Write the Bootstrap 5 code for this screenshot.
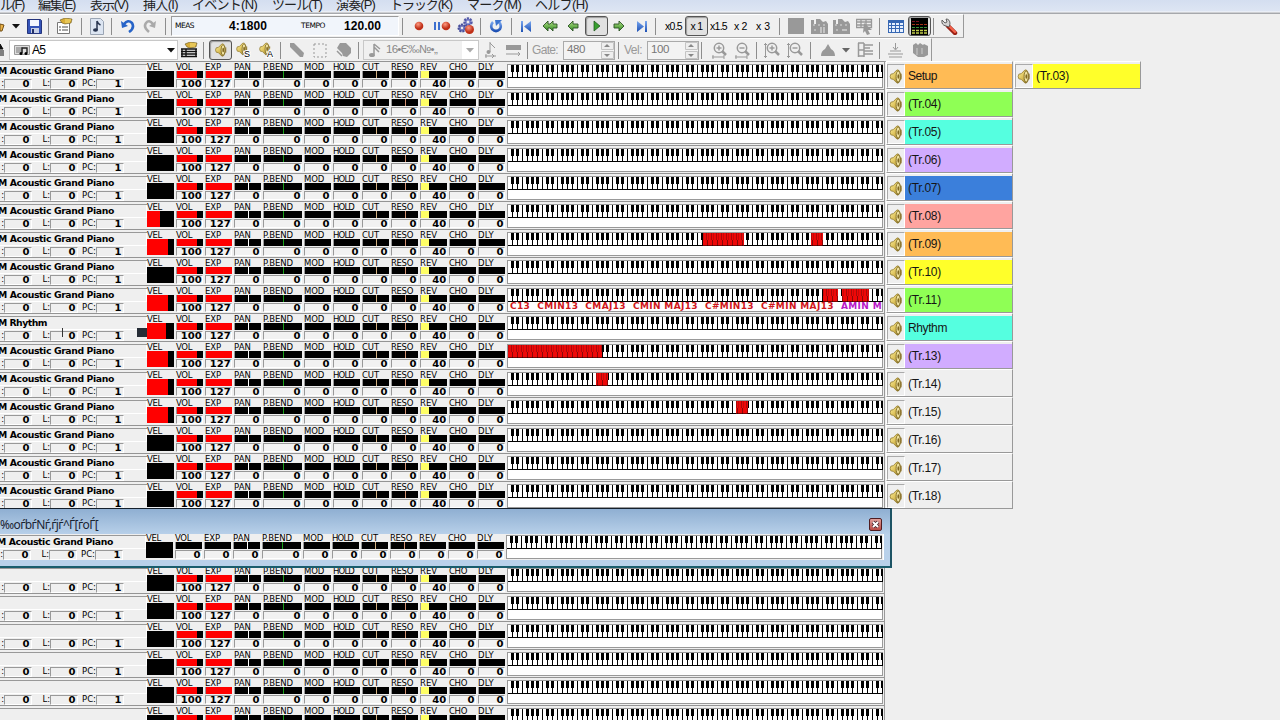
<!DOCTYPE html>
<html lang="ja">
<head>
<meta charset="utf-8">
<title>MIDI Sequencer</title>
<meta name="viewport" content="width=device-width, initial-scale=1">
<link rel="stylesheet" href="https://cdn.jsdelivr.net/npm/bootstrap@5.3.0/dist/css/bootstrap.min.css">
<style>
*{box-sizing:border-box}
body{background:#efefef;width:1280px;height:720px;overflow:hidden;font-family:"Liberation Sans","Noto Sans CJK JP",sans-serif;color:#000;line-height:1}
svg{display:block;flex:none}
.fit{display:inline-block;white-space:nowrap;flex:none}
.menustrip{height:14px;background:linear-gradient(#d4def0,#dde5f3 11px,#f6f7fa 12px,#a6a8ac 13px);font-size:13px;color:#222}
.menustrip .fit{line-height:16px;margin-top:-6px;position:relative;top:-2px}
.bar{border-bottom:1px solid #aaa;border-top:1px solid #fff;background:#f0f0f0;flex:none}
.bar1{width:964px;height:24px;border-right:1px solid #999}
.bar2{width:932px;height:24px;border-right:1px solid #999}
.cell{height:22px;flex:none;white-space:nowrap}
.vsep{width:1px;height:17px;background:#8d8d8d}
.panel{background:#f1f5fb;border:1px solid #9a9a9a;border-right-color:#fff;border-bottom-color:#fff;height:20px;font-family:"DejaVu Sans",sans-serif}
.pressed{background:#e1e1e1;border:1px solid #555;border-radius:3px;box-shadow:inset 1px 1px 1px #999;height:20px;width:100%}
.combo{border:1px solid #c8c8c8;height:20px;width:100%}
.spin{border:1px solid #aaa;height:19px;width:100%;color:#777;background:#f3f3f3}
.gothic{font-family:"Liberation Sans",sans-serif}
.tracks{width:885px;border-right:1px solid #999;flex:none}
.trk{height:28px;border-top:1px solid #949494;flex:none;background:#efefef}
.ident{width:147px;height:25px;margin-top:2px;border-top:1px solid #999;flex:none}
.nm{height:13px;border-right:1px solid #fff;border-bottom:1px solid #fff;font:bold 9.3px/11px "DejaVu Sans",sans-serif;width:147px}
.nums{margin-top:1px;height:10px;font:8.5px/9px "DejaVu Sans",sans-serif}
.lab{text-align:right;flex:none;white-space:nowrap}
.num{border-left:1px solid #999;border-top:1px solid #999;border-right:1px solid #fff;border-bottom:1px solid #fff;width:28px;height:10px;font:bold 9.5px/7px "DejaVu Sans",sans-serif;text-align:right;padding-right:1px;flex:none}
.num b,.val b{display:inline-block;transform:scaleX(1.06);transform-origin:100% 50%}
.mtr{width:27px;margin-right:2px;flex:none;padding-top:2px}
.cap{height:7px;font:8.5px/7px "DejaVu Sans",sans-serif;white-space:nowrap}
.cap .fit{vertical-align:top;line-height:6px}
.gauge{background:#000;height:7px;border-left:1px solid #999;display:flex}
.gauge i{display:block;height:7px;flex:none}
.val{border:1px solid #999;border-right-color:#fff;border-bottom-color:#fff;height:9px;font:bold 9.5px/7px "DejaVu Sans",sans-serif;text-align:right;margin-top:1px;background:#f2f2f2}
.vel{background:#000;height:16px;width:27px}
.keys{width:376px;height:24px;border:1px solid #999;background:#fff;margin-top:2px;flex:none}
.chords{font:bold 9px/9px "DejaVu Sans",sans-serif;color:#d01820;padding-left:2px;white-space:nowrap}
.chords em{font-style:normal;color:#b818c8}
.tcell{width:127px;height:28px;border:1px solid #999;border-left-color:#fff;border-top-color:#fff;flex:none;background:#efefef;padding:2px 0 0 0}
.spk{width:18px;height:24px;border:1px solid #aaa;border-right-color:#fff;border-bottom-color:#fff;flex:none}
.tname{height:24px;width:107px;font-size:12px;padding-left:3px;color:#151515}
.floater{left:-2px;top:508px;width:894px;height:60px;background:linear-gradient(#8fafd2,#b9d1ea 26px,#b9d1ea);border:1px solid #15202c;border-right:2px solid #1c5364;border-bottom:2px solid #1a5d6d}
.ftitle{height:25px;font:12px/31px "Noto Sans","DejaVu Sans",sans-serif;color:#1a2433}
.client{width:885px;height:26px;background:#efefef;border-right:1px solid #fff}
.client .trk{border-top:0;height:26px;background:none}
.client .trk>*{position:relative;top:-1px}
.xbtn{width:13px;height:13px;border:1px solid #501c20;border-radius:2px;background:linear-gradient(#e0a09c,#b94a45);margin-top:9px;margin-right:8px}
.blob{left:137px;top:328px;width:10px;height:9px;background:#252c35}
.hair{left:62px;top:328px;width:1px;height:9px;background:#333}
</style>
</head>
<body>
<svg width="0" height="0" class="position-absolute">
<defs>
<linearGradient id="gold" x1="0" y1="0" x2="1" y2="1"><stop offset="0" stop-color="#fff3a0"/><stop offset=".5" stop-color="#dcc058"/><stop offset="1" stop-color="#77601a"/></linearGradient>
<radialGradient id="redg" cx=".4" cy=".3"><stop offset="0" stop-color="#ff9a80"/><stop offset="1" stop-color="#c03018"/></radialGradient>
<linearGradient id="blu" x1="0" y1="0" x2="0" y2="1"><stop offset="0" stop-color="#7aa8f0"/><stop offset="1" stop-color="#1d50b4"/></linearGradient>
<linearGradient id="grn" x1="0" y1="0" x2="0" y2="1"><stop offset="0" stop-color="#b4e088"/><stop offset="1" stop-color="#2f8a20"/></linearGradient>
<pattern id="oct" width="35" height="13" patternUnits="userSpaceOnUse">
<path fill="#fff" d="M0 0h35v13H0z"/><path fill="#000" d="M4 0h1v12H4zM9 0h1v12H9zM14 0h1v12h-1zM19 0h1v12h-1zM24 0h1v12h-1zM29 0h1v12h-1zM34 0h1v12h-1zM3 0h3v7H3zM8 0h3v7H8zM18 0h3v7h-3zM23 0h3v7h-3zM28 0h3v7h-3zM0 12h35v1H0z"/></pattern>
<pattern id="hot" width="5" height="13" patternUnits="userSpaceOnUse">
<path fill="#ee0808" d="M0 0h5v13H0z"/><path fill="#8a0808" d="M4 7h1v6H4z"/><path fill="#a80a0a" d="M3 0h1v7H3z"/><path fill="#c80808" d="M0 0h1v7H0z"/></pattern>
<symbol id="s-spk" viewBox="0 0 14 16"><path d="M1.500 5.500L4 5l4-4q2-.5 3 2 2.500 5 0 10-1 2.500-3 2l-4-4-2.500-.5q-1.500-2.500 0-5z" fill="url(#gold)" stroke="#8b7326" stroke-width=".8"/><ellipse cx="9.300" cy="8" rx="2.200" ry="6" fill="#f0e2a0" stroke="#6f5b18" stroke-width=".8"/><ellipse cx="9.500" cy="8" rx="1" ry="2.500" fill="#806820"/><path d="M12.500 5v6" stroke="#927830"/></symbol>
<symbol id="s-mag" viewBox="0 0 17 17"><circle cx="8" cy="6" r="4.700" fill="none" stroke="#999" stroke-width="1.500"/><path d="M11 9l4 4" stroke="#999" stroke-width="2.500"/><path d="M5.500 6h5" stroke="#999" stroke-width="1.400"/></symbol>
<symbol id="s-arr" viewBox="0 0 12 12"><path d="M1 6l5-5v3h5v4H6v3z" fill="url(#grn)" stroke="#2b5225" stroke-width=".9"/></symbol>
<symbol id="s-dn" viewBox="0 0 8 5"><path d="M0 0h8L4 4.500z"/></symbol>
</defs></svg>

<div class="d-flex flex-column">
  <nav class="menustrip d-flex" id="menu"></nav>
  <div class="bar bar1 d-flex" id="bar1"></div>
  <div class="bar bar2 d-flex" id="bar2"></div>
</div>
<main class="d-flex align-items-start" style="margin-top:-1px">
  <section class="tracks d-flex flex-column" id="tracks"></section>
  <section class="d-flex flex-column" id="cells"></section>
</main>
<div class="blob position-absolute"></div><div class="hair position-absolute"></div>
<div class="floater position-absolute">
  <div class="ftitle d-flex justify-content-between"><span class="fit" data-w="98" style="margin-left:1px">‰oѓbѓNѓ‚ѓjѓ^Ѓ[ѓoЃ[</span>
  <div class="xbtn"><svg width="11" height="11" viewBox="0 0 11 11"><path d="M3 3l5 5M8 3L3 8" stroke="#402028" stroke-width="3.500"/><path d="M3 3l5 5M8 3L3 8" stroke="#fff" stroke-width="2"/></svg></div></div>
  <div class="client" id="client"></div>
</div>

<script src="https://cdn.jsdelivr.net/npm/bootstrap@5.3.0/dist/js/bootstrap.bundle.min.js"></script>
<script>
const $=id=>document.getElementById(id);
const fit=(t,w,c='',s='')=>`<span class="fit ${c}" data-w="${w}" style="${s}">${t}</span>`;
const svg=(w,h,b)=>`<svg width="${w}" height="${h}" viewBox="0 0 ${w} ${h}">${b}</svg>`;
const use=(id,w,h,f='')=>`<svg width="${w}" height="${h}" ${f}><use href="#${id}" width="${w}" height="${h}"/></svg>`;
// items are [start, width, markup]; the space between neighbours becomes a margin
function strip(items){let at=0;return items.map(([x,w,h])=>{const m=x-at;at=x+w;return `<div class="cell d-flex align-items-center" style="width:${w}px;margin-left:${m}px">${h}</div>`}).join('')}
const sep=x=>[x,1,'<div class="vsep"></div>'];
$('menu').innerHTML=(()=>{let at=0;return [['ル(F)',0,24],['編集(E)',38,37],['表示(V)',90,38],['挿入(I)',143,35],['イベント(N)',192,65],['ツール(T)',272,50],['演奏(P)',336,39],['トラック(K)',390,62],['マーク(M)',467,54],['ヘルプ(H)',535,53]].map(([t,x,w])=>{const m=x-at;at=x+w;return `<div style="width:${w}px;margin-left:${m}px">${fit(t,w)}</div>`}).join('')})();

const G='#999';
const caret=c=>use('s-dn',8,5,`fill="${c}"`);
const ball='<circle cx="6" cy="6" r="4.300" fill="url(#redg)"/>';
const hand='<path d="M4 2l5-2 7 1-1 4-6 1-3-1z" fill="#d9ad35" stroke="#67561c" stroke-width=".6"/><path d="M9 2h6M9 4h5" stroke="#f6e07b"/>';
const film=(x)=>svg(17,17,`<path d="M0 2h3v4h2V1h4l3 3 3-1 2 3v10H0z" fill="${G}"/><path d="M2 7h2M7 7h2M12 7h2M3 12h2" stroke="#ddd"/>${x}`);
$('bar1').innerHTML=strip([
 [0,5,svg(5,14,'<path d="M0 5l4 1-2 6H0z" fill="#eab248" stroke="#735018"/>')],
 [12,8,caret('#111')],
 [27,15,svg(15,15,'<path d="M.5.5h13l1 1v13H.5z" fill="#3554b8" stroke="#24347c"/><path d="M3 1h9v6H3z" fill="#f4f7ff"/><path d="M4 9h8v5H4z" fill="#c6cfe6"/><path d="M5 10h2v4H5z" fill="#223068"/>')],
 sep(48),
 [56,18,svg(18,17,'<path d="M1.500 4.500h12v11h-12z" fill="#fff" stroke="#777"/><path d="M3 9h2M6 9h6M3 12h2M6 12h6" stroke="#888" stroke-width="1.500"/>'+hand)],
 sep(81),
 [90,14,svg(14,17,'<path d="M.5.5h10l3 3v13H.5z" fill="#dce5f2" stroke="#9aa5b4"/><path d="M7 3v9M7 3q1 3 3.500 4" stroke="#27344f" stroke-width="1.500" fill="none"/><ellipse cx="5.500" cy="12" rx="2.500" ry="1.800" fill="#27344f"/>')],
 sep(111),
 [121,14,svg(14,14,'<path d="M3 5q4-5 8-1 3 5-3 9" fill="none" stroke="#2764c8" stroke-width="2.600"/><path d="M0 2l1 7 6-2z" fill="#2764c8"/>')],
 [143,13,svg(13,14,'<path d="M10 5Q6 0 3 4q-3 4 3 9" fill="none" stroke="#aaa" stroke-width="2.600"/><path d="M13 2l-1 7-6-2z" fill="#aaa"/>')],
 sep(165),
 [171,228,`<div class="panel w-100 d-flex align-items-center">${fit('MEAS',19,'','font-size:7.5px;margin-left:3px')}${fit('4:1800',38,'fw-bold gothic','font-size:12px;margin-left:35px')}${fit('TEMPO',24,'','font-size:7.5px;margin-left:34px')}${fit('120.00',37,'fw-bold gothic','font-size:12px;margin-left:19px')}</div>`],
 sep(402),
 [413,12,svg(12,12,ball)],
 [433,18,svg(18,12,'<path d="M1 2h2v8H1zM5 2h2v8H5z" fill="#3d70cf"/><g transform="translate(7 0)">'+ball+'</g>')],
 [457,18,svg(18,18,'<circle cx="11" cy="5" r="3.500" fill="#888fd0" stroke="#5259a8" stroke-width="2.500" stroke-dasharray="2 1"/><circle cx="5" cy="11" r="3.500" fill="#7078bd" stroke="#464d9a" stroke-width="2" stroke-dasharray="2 1"/><circle cx="5" cy="11" r="1.200" fill="#eee"/><circle cx="11" cy="5" r="1.200" fill="#eee"/><circle cx="12.500" cy="12.500" r="4.500" fill="url(#redg)"/>')],
 sep(480),
 [489,14,svg(14,14,'<path d="M4 3Q1 6 3 10q4 4 8 0 2-4-1-7" fill="none" stroke="url(#blu)" stroke-width="2.600"/><path d="M6 1h7L7 7z" fill="#3c74d0"/>')],
 sep(511),
 [520,13,svg(13,13,'<path d="M1 1h2v11H1zM11 1v11L4 6.500z" fill="url(#blu)"/>')],
 [542,16,svg(16,12,'<path d="M1 6l5-5v3h2l3-3v3h4v4h-4v3L8 8H6v3z" fill="url(#grn)" stroke="#2b5225" stroke-width=".9"/>')],
 [567,12,use('s-arr',12,12)],
 [585,23,`<div class="pressed d-flex align-items-center justify-content-center">${svg(8,12,'<path d="M1 1l6 5-6 5z" fill="#39a030" stroke="#145012" stroke-width=".7"/>')}</div>`],
 [613,12,svg(12,12,'<path d="M11 6L6 1v3H1v4h5v3z" fill="url(#grn)" stroke="#2b5225" stroke-width=".9"/>')],
 [636,12,svg(12,13,'<path d="M9 1h2v11H9zM1 1v11l7-5.500z" fill="url(#blu)"/>')],
 sep(655),
 [665,17,fit('x0.5',17,'','font-size:10.5px')],
 [685,23,`<div class="pressed d-flex align-items-center justify-content-center">${fit('x 1',12,'','font-size:10.5px')}</div>`],
 [710,17,fit('x1.5',17,'','font-size:10.5px')],
 [734,13,fit('x 2',13,'','font-size:10.5px')],
 [756,14,fit('x 3',14,'','font-size:10.5px')],
 sep(779),
 [788,16,svg(16,16,`<path d="M0 0h16v16H0z" fill="${G}"/>`)],
 [811,17,film('<path d="M10 9v6M13 9v6" stroke="#eee"/>')],
 [833,17,film('<path d="M9 12h5" stroke="#eee"/>')],
 [856,18,svg(18,17,`<path d="M.5 1.500h15v8H.5zM.5 4h15M.5 7h15M5 1v8M10 1v8" fill="none" stroke="${G}" stroke-width="1.300"/><path d="M8 5l8 7-4 0 2 4-3 1-2-4-2 2z" fill="${G}"/>`)],
 sep(879),
 [888,16,svg(16,13,'<path d="M0 0h16v13H0z" fill="#3768b4"/><path d="M1 3h2v2H1zM4 3h3v2H4zM8 3h3v2H8zM12 3h3v2h-3zM1 6h2v2H1zM4 6h3v2H4zM8 6h3v2H8zM12 6h3v2h-3zM1 9h2v3H1zM4 9h3v3H4zM8 9h3v3H8zM12 9h3v3h-3z" fill="#e8f1ff"/>')],
 [908,23,`<div class="pressed d-flex align-items-center justify-content-center">${svg(17,17,'<path d="M0 0h17v17H0z"/><g stroke-dasharray="3 1"><path d="M1 3.500h3M5 3.500h3" stroke="#712"/><path d="M1 6.500h15" stroke="#a33018"/><path d="M1 9.500h15" stroke="#369038"/><path d="M1 12.500h15M1 15h15" stroke="#c4cf4c" stroke-width="1.500"/></g>')}</div>`],
 sep(933),
 [941,17,svg(17,17,'<path d="M7 8l7 7" stroke="#9a2015" stroke-width="4.500" stroke-linecap="round"/><path d="M8 8l6 6" stroke="#f3624a" stroke-width="2.300" stroke-linecap="round"/><path d="M1 2q-1 5 4 6l3 1 1-3Q9 1 5 1l1 3-2 1z" fill="#d4d4d4" stroke="#555" stroke-width=".9"/>')]
]);
const mag=(plus,v)=>svg(17,17,`<use href="#s-mag" width="17" height="17"/>${plus?`<path d="M8 3.500v5" stroke="${G}" stroke-width="1.400"/>`:''}${v?`<path d="M1.500 1v15M0 2.500h3M0 14.500h3" stroke="${G}"/>`:`<path d="M1 15h12M2 13v4M13 13v4" stroke="${G}"/>`}`);
const spin=v=>`<div class="spin d-flex align-items-center">${fit(v,18,'','font-size:11.500px;margin-left:3px')}<div class="ms-auto d-flex flex-column" style="gap:1px">${['M3 5l3-3 3 3z','M3 3l3 3 3-3z'].map(d=>svg(13,8,`<path d="M.5.5h12v7H.5z" fill="#eee" stroke="#c4c4c4"/><path d="${d}" fill="#888"/>`)).join('')}</div></div>`;
$('bar2').innerHTML=strip([
 [0,4,svg(4,12,'<path d="M0 0l3 5H0zM0 7h4M0 9h4M0 11h4" stroke="#111" fill="#111"/>')],
 [9,169,`<div class="combo bg-white d-flex align-items-center ps-1">${svg(16,11,'<path d="M.5.500h15v9H.5z" fill="#ddd" stroke="#999"/><path d="M2 3h7M2 5h7M2 7h7" stroke="#777"/><path d="M8 8V3h5v5" fill="none" stroke="#222" stroke-width="1.400"/><circle cx="7" cy="8.500" r="1.500"/><circle cx="12" cy="8.500" r="1.500"/>')}${fit('A5',13,'','font-size:12px;margin-left:2px')}<span class="ms-auto" style="margin-right:2px">${caret('#111')}</span></div>`],
 [181,17,svg(17,16,hand+'<path d="M1 7h15v8H1z" fill="#fff"/><path d="M0 7h16M0 9.500h16M0 12h16M0 14.500h16M1 7v8M5 7v8M15 7v8" stroke="#111" stroke-width="1.400"/>')],
 sep(203),
 [209,23,`<div class="pressed d-flex align-items-center justify-content-center">${use('s-spk',14,14)}</div>`],
 [236,15,svg(15,16,'<use href="#s-spk" width="12" height="14"/><text x="8" y="15" font-size="9" stroke="#fff" stroke-width="2" paint-order="stroke">S</text>')],
 [259,15,svg(15,16,'<use href="#s-spk" width="12" height="14"/><text x="8" y="15" font-size="9" stroke="#fff" stroke-width="2" paint-order="stroke">A</text>')],
 sep(280),
 [289,16,svg(16,16,`<path d="M1 1l4 0 10 10-1 4-3 0L1 5z" fill="${G}"/>`)],
 [313,14,svg(14,15,`<path d="M1 1h12v13H1z" fill="none" stroke="${G}" stroke-dasharray="2 2"/>`)],
 [336,16,svg(16,16,`<path d="M4 1l6 0 5 5 0 5-4 4-4-1-1-3-5-5z" fill="${G}"/><path d="M1 9l5 5" stroke="${G}" stroke-width="1.500"/>`)],
 sep(358),
 [363,116,`<div class="combo d-flex align-items-center ps-1">${svg(13,15,`<path d="M6 1v10M6 1l6 5M6 4l5 5" stroke="${G}" stroke-width="1.500"/><ellipse cx="4" cy="12" rx="3" ry="2" fill="${G}"/>`)}${fit('16•Є‰№•„',51,'','font-size:11.5px;color:#888;margin-left:5px')}<span class="ms-auto bg-white h-100 d-flex align-items-center px-1">${caret('#aaa')}</span></div>`],
 [484,13,svg(13,17,`<path d="M6 0v10M6 1l5 5M1 14h11M2 12v4M10 14l-2-2M10 14l-2 2" stroke="${G}"/><circle cx="4.500" cy="10" r="2" fill="${G}"/>`)],
 [505,17,svg(17,12,`<path d="M1 1h15v5H1z" fill="${G}"/><path d="M1 10h14M13 8l2 2-2 2" fill="none" stroke="${G}"/>`)],
 sep(527),
 [532,27,fit('Gate:',26,'','font-size:12px;color:#999')],
 [563,52,spin('480')],
 sep(618),
 [624,20,fit('Vel:',18,'','font-size:12px;color:#999')],
 [647,52,spin('100')],
 sep(701),
 [711,17,mag(1,0)],[734,17,mag(0,0)],sep(756),[764,17,mag(1,1)],[787,17,mag(0,1)],sep(810),
 [820,16,svg(16,14,`<path d="M1 13q0-5 4-7l3-5 3 5q4 2 4 7z" fill="${G}"/>`)],
 [842,8,caret('#666')],
 [857,17,svg(17,16,`<path d="M1 1h6M1 8h6M1 14h6M1.500 1v14M7 3h9M7 6h6M7 9h9M7 12h9M7 1v14" stroke="${G}" stroke-width="1.500"/>`)],
 sep(879),
 [888,15,svg(15,16,`<path d="M7.500 1v6M5 5l2.500 3L10 5M2 9h11M0 12h15M1 15h13" stroke="${G}" fill="none"/>`)],
 [912,16,svg(16,16,`<path d="M1 3l3-2 2 2 2-2 3 2 1-1 4 2v9l-4 2H6l-5-4z" fill="${G}"/><path d="M5 6v7M10 6v6" stroke="#ccc"/>`)]
]);

// 128 keys = 75 white keys of 5px; hot spans are in px from the lowest key
const keys=(hot,ch)=>`<div class="keys">${svg(375,13,'<path d="M0 0h375v13H0z" fill="url(#oct)"/>'+(hot||[]).map(([a,b])=>`<path d="M${a} 0h${b-a}v12.500H${a}z" fill="url(#hot)"/>`).join(''))}${ch?`<div class="chords">${ch}</div>`:''}</div>`;
const bit=(m,w,c)=>`<i style="margin-left:${m}px;width:${w}px;background:${c}"></i>`;
function row(o){
 const z=o.zero, cols=[['VOL',z?0:100,z?'':bit(0,20,'#f00'),16],['EXP',z?0:127,z?'':bit(0,26,'#f00'),16],['PAN',0,bit(13,1,'#fff'),17],['P.BEND',0,bit(19,1,'#18a018'),30],['MOD',0,'',20],['HOLD',0,'',21],['CUT',0,bit(13,1,'#d2b080'),17],['RESO',0,bit(13,1,'#d29070'),22],['REV',z?0:40,z?'':bit(0,8,'#ff6'),17],['CHO',0,'',18],['DLY',0,'',16]];
 return `<div class="trk d-flex"><div class="ident"><div class="nm">${o.name?fit(o.name,o.name.length>10?116:49,'','margin-left:-2px'):''}</div>
 <div class="nums d-flex"><span class="lab" style="width:4px">:</span><span class="num"><b>0</b></span><span class="lab" style="width:18px">L:</span><span class="num"><b>0</b></span><span class="lab" style="width:18px">${fit('PC:',14)}</span><span class="num"><b>1</b></span></div></div>
 <div class="mtr"><div class="cap">${fit('VEL',15)}</div><div class="vel">${o.vel?`<div class="h-100" style="width:${o.vel}px;background:#f00"></div>`:''}</div></div>
 ${cols.map(([n,v,g,w])=>`<div class="mtr"${n=='P.BEND'?' style="width:39px"':''}><div class="cap">${fit(n,w)}</div><div class="gauge">${g}</div><div class="val"><b>${v}</b></div></div>`).join('')}
 ${keys(o.hot,o.ch)}</div>`}
const P='M Acoustic Grand Piano';
const live={5:{vel:13},6:{vel:21,hot:[[195,236],[303,315]]},8:{vel:21,hot:[[315,330],[334,361]],ch:fit('C13&nbsp; CMIN13&nbsp; CMAJ13&nbsp; CMIN MAJ13&nbsp; C#MIN13&nbsp; C#MIN MAJ13&nbsp; <em>AMIN M</em>',372)},9:{vel:19},10:{vel:21,hot:[[0,94]]},11:{vel:21,hot:[[88,100]]},12:{vel:21,hot:[[228,240]]}};
$('tracks').innerHTML=Array.from({length:24},(_,i)=>row({name:i<16?(i==9?'M Rhythm':P):'',...live[i]})).join('');
$('client').innerHTML=row({name:P,zero:1});
const C=['#ffbb55','#8fff55','#55ffe0','#d1acff','#3b7fdb','#ffa4a0','#ffbb55','#ffff2a','#8fff55','#55ffe0','#d1acff'];
const tcell=(t,w,c)=>`<div class="tcell d-flex"><div class="spk d-flex align-items-center justify-content-center">${use('s-spk',14,15)}</div><div class="tname d-flex align-items-center" style="background:${c||'transparent'}">${fit(t,w)}</div></div>`;
$('cells').innerHTML=Array.from({length:16},(_,i)=>{const t=i==0?'Setup':i==9?'Rhythm':`(Tr.${String(i+3).padStart(2,'0')})`;return `<div class="d-flex" style="margin-left:1px">${tcell(t,i==0?29:i==9?39:33,C[i])}${i?'':'<div style="margin-left:1px">'+tcell('(Tr.03)',33,'#ffff2a')+'</div>'}</div>`}).join('');

// bring each label to its set width by tracking
document.querySelectorAll('.fit').forEach(e=>{const n=[...e.textContent].length,w=e.getBoundingClientRect().width;e.style.letterSpacing=((+e.dataset.w-w)/n).toFixed(3)+'px'});
</script>
</body>
</html>
